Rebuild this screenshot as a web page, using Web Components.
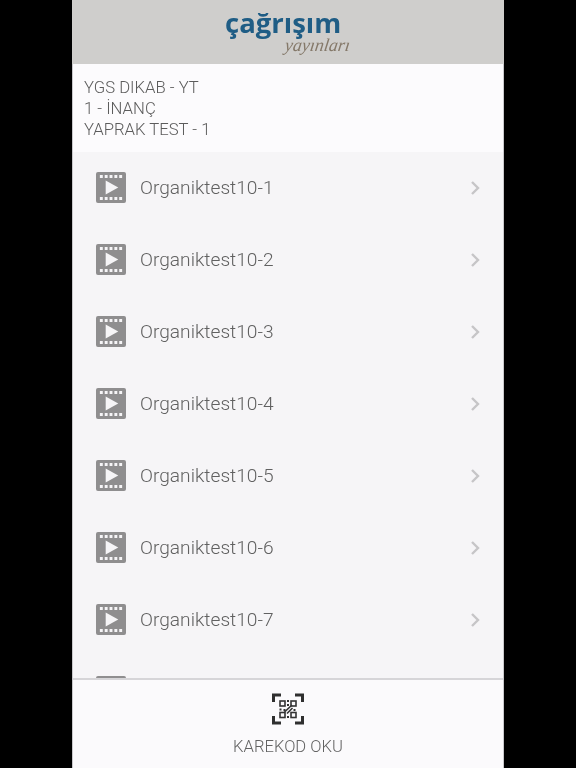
<!DOCTYPE html>
<html>
<head>
<meta charset="utf-8">
<title>Karekod</title>
<style>
    html, body { margin: 0; height: 100%; background: #000; overflow: hidden; }
    body { display: flex; justify-content: center; font-family: Roboto, "Liberation Sans", sans-serif; }
</style>
</head>
<body>
<app-shell>
    <app-header></app-header>
    <book-info>
        <span>YGS DIKAB - YT</span>
        <span>1 - İNANÇ</span>
        <span>YAPRAK TEST - 1</span>
    </book-info>
    <video-list>
        <video-row>Organiktest10-1</video-row>
        <video-row>Organiktest10-2</video-row>
        <video-row>Organiktest10-3</video-row>
        <video-row>Organiktest10-4</video-row>
        <video-row>Organiktest10-5</video-row>
        <video-row>Organiktest10-6</video-row>
        <video-row>Organiktest10-7</video-row>
        <video-row></video-row>
    </video-list>
    <qr-footer></qr-footer>
</app-shell>

<script>
class AppShell extends HTMLElement {
    constructor() {
        super();
        this.attachShadow({ mode: 'open' });
        this.shadowRoot.innerHTML = `
            <style>
                :host { display: flex; flex-direction: column; width: 432px; height: 768px; background: #f6f5f7; box-sizing: border-box; border-left: 1px solid #c9c8cb; border-right: 1px solid #c9c8cb; filter: blur(0.35px); }
            </style>
            <slot></slot>
        `;
    }
}

class AppHeader extends HTMLElement {
    constructor() {
        super();
        this.attachShadow({ mode: 'open' });
        this.shadowRoot.innerHTML = `
            <style>
                :host { display: flex; justify-content: center; height: 64px; flex: none; background: #cfcecc; margin: 0 -1px; }
                .logo { position: relative; width: 126px; height: 64px; margin-left: 2px; }
                .name { position: absolute; left: -1px; top: 11px; font: 700 27.5px/24px "Open Sans", sans-serif; color: #1f5d85; white-space: nowrap; }
                .sub { position: absolute; right: 2px; top: 37px; font: italic 400 18px/16px "Liberation Serif", serif; color: #85796a; white-space: nowrap; transform: skewX(-8deg); }
            </style>
            <div class="logo">
                <span class="name">çağrışım</span>
                <span class="sub">yayınları</span>
            </div>
        `;
    }
}

class BookInfo extends HTMLElement {
    constructor() {
        super();
        this.attachShadow({ mode: 'open' });
        this.shadowRoot.innerHTML = `
            <style>
                :host { display: flex; flex-direction: column; flex: none; height: 88px; box-sizing: border-box; padding: 12.5px 11px 0; background: #fcfbfd; color: #5c5c5c; font: 300 16.7px/21px Roboto, sans-serif; }
                ::slotted(span) { display: block; }
            </style>
            <slot></slot>
        `;
    }
}

class VideoList extends HTMLElement {
    constructor() {
        super();
        this.attachShadow({ mode: 'open' });
        this.shadowRoot.innerHTML = `
            <style>
                :host { display: block; flex: 1; min-height: 0; overflow: hidden; background: #f6f5f7; }
            </style>
            <slot></slot>
        `;
    }
}

class VideoRow extends HTMLElement {
    constructor() {
        super();
        this.attachShadow({ mode: 'open' });
        this.shadowRoot.innerHTML = `
            <style>
                :host { display: flex; align-items: center; height: 72px; padding: 0 23px; color: #616161; font: 300 19.15px/24px Roboto, sans-serif; }
                .film { flex: none; width: 30px; height: 31px; margin: 0 14px 1px 0; }
                .label { flex: 1; }
                .chevron { flex: none; width: 10px; height: 16px; margin-bottom: 1px; }
            </style>
            <svg class="film" viewBox="0 0.5 31 31" preserveAspectRatio="none">
                <rect x="0" y="0.5" width="31" height="31" rx="2" fill="#8f8e8f"/>
                <g fill="#f6f5f7">
                    <rect x="4" y="3.5" width="3" height="3"/><rect x="9" y="3.5" width="3" height="3"/><rect x="14" y="3.5" width="3" height="3"/><rect x="19" y="3.5" width="3" height="3"/><rect x="24" y="3.5" width="3" height="3"/>
                    <rect x="4" y="25.5" width="3" height="3"/><rect x="9" y="25.5" width="3" height="3"/><rect x="14" y="25.5" width="3" height="3"/><rect x="19" y="25.5" width="3" height="3"/><rect x="24" y="25.5" width="3" height="3"/>
                    <path d="M10 9 L23 16 L10 23 Z"/>
                </g>
            </svg>
            <span class="label"><slot></slot></span>
            <svg class="chevron" viewBox="0 0 10 16">
                <path d="M2 2 L8 8 L2 14" fill="none" stroke="#c6c5c7" stroke-width="2.4"/>
            </svg>
        `;
    }
}

class QrFooter extends HTMLElement {
    constructor() {
        super();
        this.attachShadow({ mode: 'open' });
        this.shadowRoot.innerHTML = `
            <style>
                :host { display: flex; flex-direction: column; align-items: center; flex: none; height: 90px; box-sizing: border-box; padding-top: 13px; background: #fbfafc; border-top: 2px solid #d6d5d8; color: #636363; font: 300 16.6px/20px Roboto, sans-serif; }
                svg { width: 32px; height: 32px; margin: 0 0 12px 0; }
            </style>
            <svg viewBox="0 0 32 32">
                <g fill="none" stroke="#2f2f2f" stroke-width="3">
                    <path d="M1.5 9 V2 H9"/><path d="M23 2 H30.5 V9"/><path d="M1.5 23 V30 H9"/><path d="M23 30 H30.5 V23"/>
                </g>
                <g fill="none" stroke="#333" stroke-width="1.6">
                    <rect x="8" y="8" width="5" height="5"/><rect x="19" y="8" width="5" height="5"/>
                    <rect x="8" y="19.5" width="5" height="5"/><rect x="19" y="19.5" width="5" height="5"/>
                    <path d="M12.5 19 L20 12"/><path d="M15 20.5 L20.5 15"/>
                </g>
                <g fill="#333">
                    <rect x="15" y="7" width="2" height="2"/><rect x="15" y="11" width="2" height="2"/>
                    <rect x="7.5" y="15.5" width="2" height="2"/><rect x="11.5" y="16" width="2" height="2"/>
                    <rect x="21.5" y="16" width="2" height="2"/><rect x="15" y="23" width="2" height="2"/>
                </g>
            </svg>
            <span>KAREKOD OKU</span>
        `;
    }
}

customElements.define('app-shell', AppShell);
customElements.define('app-header', AppHeader);
customElements.define('book-info', BookInfo);
customElements.define('video-list', VideoList);
customElements.define('video-row', VideoRow);
customElements.define('qr-footer', QrFooter);
</script>
</body>
</html>
